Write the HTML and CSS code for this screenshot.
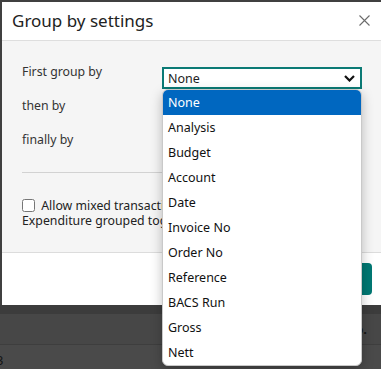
FILE: index.html
```html
<!DOCTYPE html>
<html lang="en">
<head>
    <meta charset="UTF-8">
    <meta name="viewport" content="width=device-width, initial-scale=1.0">
    <title>Group by settings</title>
    <link rel="stylesheet" href="styles.css">
</head>
<body>
    <div class="screen">
        <!-- Modal dialog -->
        <div class="dialog">
            <div class="dialog-header">
                <h2>Group by settings</h2>
                <button class="close-btn" aria-label="Close">
                    <svg width="11" height="11" viewBox="0 0 11 11"><path d="M0.5 0.5 L10.5 10.5 M10.5 0.5 L0.5 10.5" stroke="#6b6b6b" stroke-width="1.1" fill="none"/></svg>
                </button>
            </div>

            <div class="dialog-body">
                <div class="field-grid">
                    <label class="field-label">First group by</label>
                    <div class="select-wrap">
                        <div class="select">
                            <span>None</span>
                            <svg class="chevron" width="11" height="7" viewBox="0 0 11 7"><path d="M1 1 L5.5 5.5 L10 1" stroke="#111" stroke-width="2.2" fill="none"/></svg>
                        </div>
                        <!-- open options list -->
                        <ul class="select-list">
                            <li class="selected">None</li>
                            <li>Analysis</li>
                            <li>Budget</li>
                            <li>Account</li>
                            <li>Date</li>
                            <li>Invoice No</li>
                            <li>Order No</li>
                            <li>Reference</li>
                            <li>BACS Run</li>
                            <li>Gross</li>
                            <li>Nett</li>
                        </ul>
                    </div>
                    <label class="field-label">then by</label>
                    <div></div>
                    <label class="field-label">finally by</label>
                    <div></div>
                </div>

                <hr class="divider">

                <p class="check-row">
                    <input type="checkbox" id="mixed">
                    <label for="mixed">Allow mixed transactions of Income and<br>Expenditure grouped together</label>
                </p>
            </div>

            <div class="dialog-footer">
                <button class="btn-primary">OK</button>
            </div>
        </div>

        <!-- page behind the overlay -->
        <div class="page-strip"></div>
        <div class="page-row"><span class="cell-right">o.</span></div>
        <div class="page-row light"><span class="cell-left">3</span></div>
    </div>
</body>
</html>
```

FILE: styles.css
```css
* {
    margin: 0;
    padding: 0;
    box-sizing: border-box;
    font-family: 'Noto Sans', 'Open Sans', sans-serif;
}

body {
    background-color: #404040;
    overflow: hidden;
}

.screen {
    width: 381px;
    height: 369px;
    overflow: hidden;
    padding-top: 2px;
}

.dialog {
    margin-left: 2px;
    width: 379px;
    background: white;
}

.dialog-header {
    height: 39px;
    display: flex;
    justify-content: space-between;
    align-items: center;
    padding: 0 11px 0 10px;
    border-bottom: 1px solid #dedede;
}

.dialog-header h2 {
    font-size: 17px;
    font-weight: normal;
    color: #222;
    margin-top: -2px;
}

.close-btn {
    background: none;
    border: none;
    display: flex;
    margin-top: -2px;
}

.dialog-body {
    background-color: #f5f5f5;
    padding: 22px 20px 20px 20px;
    border-bottom: 1px solid #dcdcdc;
    height: 212px;
}

.field-grid {
    display: grid;
    grid-template-columns: 140px 200px;
    grid-auto-rows: 34px;
}

.field-label {
    font-size: 12.3px;
    line-height: 18px;
    color: #333;
}

.select-wrap {
    position: relative;
    margin-top: 4px;
}

.select {
    height: 22px;
    border: 2px solid #0b7a75;
    background: white;
    display: flex;
    justify-content: space-between;
    align-items: center;
    padding: 0 5px 0 4px;
    font-size: 12.5px;
    color: #222;
}

.select-list {
    list-style: none;
    position: absolute;
    top: 22px;
    left: 0;
    width: 200px;
    background: white;
    border: 1px solid #c9c9c9;
    border-radius: 6px;
    box-shadow: 0 4px 12px rgba(0, 0, 0, 0.25);
    overflow: hidden;
    z-index: 10;
}

.select-list li {
    height: 25px;
    line-height: 25px;
    padding-left: 5px;
    font-size: 12.5px;
    color: #111;
}

.select-list li.selected {
    background-color: #0067c0;
    color: white;
}

.divider {
    border: none;
    border-top: 1px solid #d2d2d2;
    margin-top: 7px;
}

.check-row {
    margin-top: 25px;
    font-size: 12.3px;
    line-height: 15px;
    color: #222;
    white-space: nowrap;
}

.check-row input {
    width: 13px;
    height: 13px;
    margin: 0 3px 0 0;
    vertical-align: -2px;
}

.dialog-footer {
    height: 52px;
    display: flex;
    justify-content: flex-end;
    padding: 10px 9px 10px 0;
}

.btn-primary {
    background-color: #007873;
    color: white;
    border: none;
    border-radius: 4px;
    height: 32px;
    width: 60px;
    font-size: 13px;
}

.page-strip {
    height: 9px;
    background-color: #3c3c3c;
}

.page-row {
    height: 31px;
    background-color: #474747;
    border-bottom: 1px solid #3e3e3e;
    position: relative;
    font-size: 13px;
}

.page-row.light {
    background-color: #4a4a4a;
    height: 30px;
}

.cell-right {
    position: absolute;
    right: 14px;
    top: 6px;
    color: #151515;
    font-weight: bold;
}

.cell-left {
    position: absolute;
    left: -4px;
    top: 6px;
    color: #151515;
}
```
